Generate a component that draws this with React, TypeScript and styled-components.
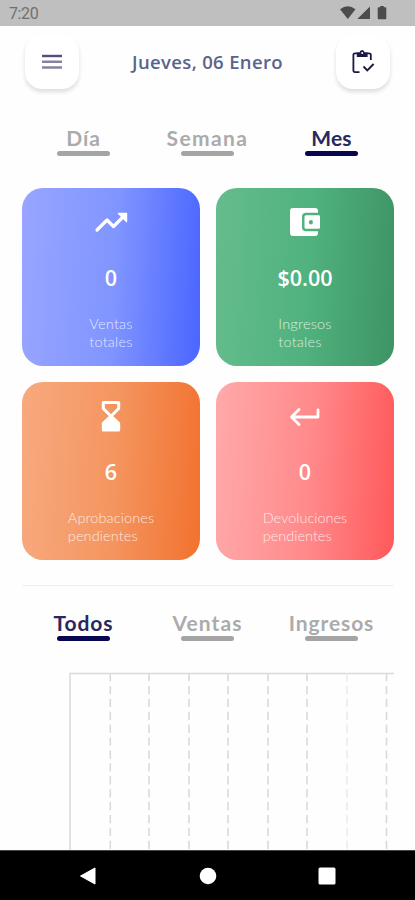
import React from 'react';
import styled, { createGlobalStyle } from 'styled-components';

const GlobalStyle = createGlobalStyle`
  * { box-sizing: border-box; }
  body { margin: 0; background: #fefefe; }
`;

const Screen = styled.div`
  width: 415px;
  height: 900px;
  display: flex;
  flex-direction: column;
  overflow: hidden;
  background: #fefefe;
  font-family: Lato, "Open Sans", sans-serif;
`;

const StatusBar = styled.div`
  height: 25.5px;
  flex: none;
  display: flex;
  align-items: center;
  justify-content: space-between;
  padding: 2px 28px 0 9px;
  background: #bfbfbf;
  color: #707070;
  font: 400 16px/20px Roboto, sans-serif;
`;

const Clock = styled.span`
  letter-spacing: -0.4px;
`;

const Header = styled.header`
  height: 72px;
  flex: none;
  display: flex;
  align-items: center;
  justify-content: space-between;
  padding: 0 25px;
`;

const IconButton = styled.button`
  width: 54px;
  height: 54px;
  display: flex;
  align-items: center;
  justify-content: center;
  padding: 0;
  border: 0;
  border-radius: 17px;
  background: #fff;
  box-shadow: 0 3px 4px rgba(0, 0, 0, 0.13);
`;

const DateTitle = styled.h1`
  margin: 0;
  color: #59648a;
  font: 600 18.5px/26px "Open Sans", sans-serif;
  letter-spacing: 0.35px;
`;

const Tabs = styled.nav<{ $gap: number }>`
  flex: none;
  display: grid;
  grid-template-columns: repeat(3, 124px);
  justify-content: center;
  margin-top: ${(p) => p.$gap}px;
`;

const Tab = styled.button<{ $active?: boolean; $spacing: number }>`
  display: flex;
  flex-direction: column;
  align-items: center;
  padding: 0;
  border: 0;
  background: none;
  color: ${(p) => (p.$active ? '#29285c' : '#ababab')};
  font: 700 21px/26px Lato, sans-serif;
  letter-spacing: ${(p) => p.$spacing}px;
  white-space: nowrap;

  &::after {
    content: '';
    width: 53px;
    height: 5px;
    border-radius: 3px;
    background: ${(p) => (p.$active ? '#080650' : '#a4a4a4')};
  }
`;

const Cards = styled.section`
  flex: none;
  display: grid;
  grid-template-columns: repeat(2, 178px);
  grid-auto-rows: 178px;
  gap: 16px;
  justify-content: center;
  margin: 32px 0 0 1px;
`;

const Card = styled.article<{ $from: string; $mid: string; $to: string }>`
  display: flex;
  flex-direction: column;
  align-items: center;
  padding-top: 16px;
  border-radius: 21px;
  background: linear-gradient(93deg, ${(p) => p.$from}, ${(p) => p.$mid} 52%, ${(p) => p.$to} 97%);
  color: #fff;
`;

const Amount = styled.strong`
  margin-top: 24px;
  font: 600 21.5px/28px "Open Sans", sans-serif;
  letter-spacing: 0;
`;

const Caption = styled.p<{ $spacing: number }>`
  margin: 23px 0 0;
  color: rgba(255, 255, 255, 0.8);
  font: 300 14.5px/18px Lato, sans-serif;
  letter-spacing: ${(p) => p.$spacing}px;
`;

const Divider = styled.hr`
  flex: none;
  width: 372px;
  height: 1px;
  margin: 25px auto 0;
  border: 0;
  background: #efefef;
`;

const ChartArea = styled.div`
  flex: 1;
  min-height: 0;
  margin: 31px 21px 0 69px;
  overflow: hidden;

  svg { display: block; }
`;

const NavBar = styled.footer`
  height: 50px;
  flex: none;
  display: grid;
  grid-template-columns: repeat(3, 119.5px);
  justify-content: center;
  align-items: center;
  justify-items: center;
  border-top: 1px solid #444;
  background: #000;
`;

const StatusIcons = () => (
  <svg width="47" height="15" viewBox="0 0 47 15" fill="#4c4c4c">
    <path d="M0 3.3Q7.8-2.8 15.5 3.3L7.8 13Z" />
    <path d="M30 .5V13H17.3Z" />
    <path d="M40.2 0h3.6v1.3h1.7q.8 0 .8.8v10.2q0 .9-.8.9h-7q-.8 0-.8-.9V2.1q0-.8.8-.8h1.7Z" />
  </svg>
);

const MenuIcon = () => (
  <svg width="20" height="16" viewBox="0 0 20 16">
    <path d="M0 2h20" stroke="#514e7b" strokeWidth="2.4" />
    <path d="M0 7.7h20M0 13.5h20" stroke="#85839f" strokeWidth="2.6" />
  </svg>
);

const ClipboardIcon = () => (
  <svg width="24" height="26" viewBox="0 0 24 26" fill="none" stroke="#1b1844" strokeWidth="1.8">
    <path d="M8.5 23.1H4Q2.4 23.1 2.4 21.5V5.6Q2.4 4.3 4 4.3H18Q19.8 4.3 19.8 5.9V11" />
    <path d="M12.5 17.5l3.8 3.8 6.3-6.3" strokeWidth="1.9" />
    <path d="M5.8 3.6h2.7Q9 1 11.1 1T13.7 3.6H16.6V8H5.8Z" fill="#1b1844" stroke="none" />
    <circle cx="11.2" cy="4.1" r="1" fill="#fff" stroke="none" />
  </svg>
);

const TrendIcon = () => (
  <svg width="36" height="36" viewBox="0 0 36 36" fill="none" stroke="#fff">
    <path d="M4 26l10-10 6.5 6.5L31 12" strokeWidth="3.2" strokeLinecap="round" strokeLinejoin="round" />
    <path d="M25.5 9.5h8v8Z" fill="#fff" strokeWidth="1.4" strokeLinejoin="round" />
  </svg>
);

const WalletIcon = () => (
  <svg width="36" height="36" viewBox="0 0 36 36" fill="#fff">
    <path d="M6 4H28Q31 4 31 7.3V8.8H19Q15 8.8 15 12.8V23.2Q15 27.2 19 27.2H31V28.7Q31 32 28 32H6Q3 32 3 28.7V7.3Q3 4 6 4Z" />
    <path fillRule="evenodd" d="M19 11.2H31.8Q33 11.2 33 12.4V23.6Q33 24.8 31.8 24.8H19Q17.5 24.8 17.5 23.3V12.7Q17.5 11.2 19 11.2ZM23.8 16Q21.8 16.2 21.8 18.2T23.8 20.4 25.9 18.2 23.8 16Z" />
  </svg>
);

const HourglassIcon = () => (
  <svg width="36" height="36" viewBox="0 0 36 36" stroke="#fff" strokeWidth="3" strokeLinejoin="round">
    <path d="M10.3 4.5H25.7V10.5L18 18.3L10.3 10.5Z" fill="none" />
    <path d="M18 18L25.7 25.3V32H10.3V25.3Z" fill="#fff" />
  </svg>
);

const ReturnIcon = () => (
  <svg width="36" height="36" viewBox="0 0 36 36" fill="none" stroke="#fff" strokeWidth="2.8" strokeLinecap="round" strokeLinejoin="round">
    <path d="M31 12V19H5M12 11.5L4.5 19L12 26.5" />
  </svg>
);

const cards = [
  { icon: <TrendIcon />, value: '0', lines: ['Ventas', 'totales'], spacing: 0.2, from: '#99a5ff', mid: '#8095ff', to: '#4d68ff' },
  { icon: <WalletIcon />, value: '$0.00', lines: ['Ingresos', 'totales'], spacing: 0.2, from: '#65bc8d', mid: '#50b27e', to: '#3f9566' },
  { icon: <HourglassIcon />, value: '6', lines: ['Aprobaciones', 'pendientes'], spacing: 0.1, from: '#f8a97f', mid: '#f4955f', to: '#f27432' },
  { icon: <ReturnIcon />, value: '0', lines: ['Devoluciones', 'pendientes'], spacing: 0, from: '#ffa9ab', mid: '#ff8a8b', to: '#ff5c5e' },
];

const gridLines = [41.3, 80, 120, 159, 199, 238, 278, 317.5];

export default function App() {
  return (
    <>
      <GlobalStyle />
      <Screen>
        <StatusBar><Clock>7:20</Clock><StatusIcons /></StatusBar>
        <Header>
          <IconButton aria-label="Menú"><MenuIcon /></IconButton>
          <DateTitle>Jueves, 06 Enero</DateTitle>
          <IconButton aria-label="Tareas"><ClipboardIcon /></IconButton>
        </Header>
        <Tabs $gap={27}>
          <Tab $spacing={0.9}>Día</Tab>
          <Tab $spacing={1.4}>Semana</Tab>
          <Tab $active $spacing={0.2}>Mes</Tab>
        </Tabs>
        <Cards>
          {cards.map((c) => (
            <Card key={c.lines.join(' ')} $from={c.from} $mid={c.mid} $to={c.to}>
              {c.icon}
              <Amount>{c.value}</Amount>
              <Caption $spacing={c.spacing}>{c.lines[0]}<br />{c.lines[1]}</Caption>
            </Card>
          ))}
        </Cards>
        <Divider />
        <Tabs $gap={24}>
          <Tab $active $spacing={0.9}>Todos</Tab>
          <Tab $spacing={1.1}>Ventas</Tab>
          <Tab $spacing={0.9}>Ingresos</Tab>
        </Tabs>
        <ChartArea>
          <svg width="325" height="178" fill="none">
            <path d="M1 180V1.5H325" stroke="#d9d9d9" strokeWidth="1.5" />
            {gridLines.map((x) => (
              <path key={x} d={`M${x} 1V178`} stroke={x === 278 ? '#ebebeb' : '#dadada'} strokeWidth="1.6" strokeDasharray="8.3 4.6" />
            ))}
          </svg>
        </ChartArea>
        <NavBar>
          <svg width="18" height="18" viewBox="0 0 18 18"><path d="M1.5 9L16 1V17Z" fill="#fff" stroke="#fff" strokeLinejoin="round" /></svg>
          <svg width="18" height="18" viewBox="0 0 18 18"><circle cx="9" cy="9" r="8.3" fill="#fff" /></svg>
          <svg width="18" height="18" viewBox="0 0 18 18"><rect x=".5" y=".5" width="17" height="17" rx="1.5" fill="#fff" /></svg>
        </NavBar>
      </Screen>
    </>
  );
}
